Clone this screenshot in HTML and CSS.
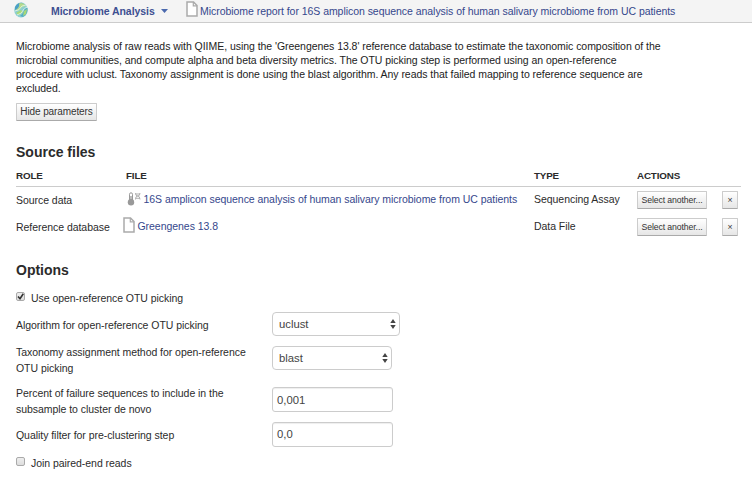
FILE: index.html
```html
<!DOCTYPE html>
<html lang="en">
<head>
<meta charset="utf-8">
<title>Microbiome Analysis</title>
<link rel="stylesheet" href="styles.css">
</head>
<body>
<svg width="0" height="0" class="defs">
  <symbol id="doc" viewBox="0 0 12 16"><path d="M1 1h6.5L11 4.5V15H1z" fill="#fff" stroke="#aaa" stroke-width="1.5"/><path d="M7.3 1v3.8H11" fill="none" stroke="#aaa" stroke-width="1.2"/></symbol>
  <symbol id="updown" viewBox="0 0 6 10"><path d="M3 0l2.7 4H.3zM3 10L.3 6h5.4z" fill="#444"/></symbol>
</svg>
<header class="topbar">
  <svg class="globe" viewBox="0 0 14 16">
    <ellipse cx="7" cy="8" rx="6.8" ry="7.5" fill="#8ccfd0"/>
    <path d="M1 5Q4 0 9 1L5 5Q3 8 1 8z" fill="#4b9fc6"/>
    <path d="M5 1.5Q9 0 12 4L8 5 4 9 2 8Q6 5 5 1.5z" fill="#b5da8c"/>
    <path d="M13.5 6Q14 12 9 15L6 14Q11 10 10 6z" fill="#55adc5"/>
    <path d="M2 11L7 8 9 10 5 13zM10 9l3-2-1 5-3 2z" fill="#a8d977"/>
    <path d="M1 9Q5 9 8 4l4-1M3 13Q8 12 10 7l3-2" fill="none" stroke="#e5f5ee" stroke-width=".8"/>
  </svg>
  <strong class="app">Microbiome Analysis</strong>
  <svg class="caret" viewBox="0 0 7 4"><path d="M0 0h7L3.5 4z" fill="#4b69ae"/></svg>
  <svg class="doc top-doc"><use href="#doc"/></svg>
  <a class="report">Microbiome report for 16S amplicon sequence analysis of human salivary microbiome from UC patients</a>
</header>
<main>
  <p class="description">Microbiome analysis of raw reads with QIIME, using the 'Greengenes 13.8' reference database to estimate the taxonomic composition of the<br>microbial communities, and compute alpha and beta diversity metrics. The OTU picking step is performed using an open-reference<br>procedure with uclust. Taxonomy assignment is done using the blast algorithm. Any reads that failed mapping to reference sequence are<br>excluded.</p>
  <button class="btn hide">Hide parameters</button>
  <h2 class="source-title">Source files</h2>
  <div class="files">
    <div class="row head"><span>ROLE</span><span>FILE</span><span>TYPE</span><span>ACTIONS</span></div>
    <div class="row">
      <span class="role">Source data</span>
      <span class="file assay-file"><svg class="assay" viewBox="0 0 14 14"><path d="M2.5 8V2.3a1.5 1.5 0 0 1 3 0V8" fill="#fff" stroke="#999"/><path d="M4 4v6" stroke="#999" stroke-width="1.3"/><circle cx="4" cy="10.2" r="3.2" fill="#999"/><path d="M8.5 1q0 3 2.2 3T13 7.5M13 1q0 3-2.3 3T8.5 7.5M8.5 2h4.5M8.5 6.3h4.5" fill="none" stroke="#aaa" stroke-width=".9"/></svg><a>16S amplicon sequence analysis of human salivary microbiome from UC patients</a></span>
      <span class="type">Sequencing Assay</span>
      <button class="btn small">Select another...</button><button class="btn small">×</button>
    </div>
    <div class="row">
      <span class="role">Reference database</span>
      <span class="file"><svg class="doc"><use href="#doc"/></svg><a>Greengenes 13.8</a></span>
      <span class="type">Data File</span>
      <button class="btn small">Select another...</button><button class="btn small">×</button>
    </div>
  </div>
  <h2 class="options-title">Options</h2>
  <div class="check first"><span class="box"><svg viewBox="0 0 9 9"><path d="M2 4.5L4 6.8 7.3 1.8" fill="none" stroke="#333" stroke-width="1.6"/></svg></span><span>Use open-reference OTU picking</span></div>
  <div class="fields">
    <span class="label">Algorithm for open-reference OTU picking</span>
    <div class="control select wide"><span>uclust</span><svg><use href="#updown"/></svg></div>
    <span class="label">Taxonomy assignment method for open-reference<br>OTU picking</span>
    <div class="control select"><span>blast</span><svg><use href="#updown"/></svg></div>
    <span class="label">Percent of failure sequences to include in the<br>subsample to cluster de novo</span>
    <div class="control input">0,001</div>
    <span class="label">Quality filter for pre-clustering step</span>
    <div class="control input">0,0</div>
  </div>
  <div class="check last"><span class="box"></span><span>Join paired-end reads</span></div>
</main>
</body>
</html>
```
FILE: styles.css
```css
* { box-sizing: border-box; }
body { margin: 0; background: #fff; color: #2b2b2b; font: 10.5px/14px "Liberation Sans", Arial, sans-serif; letter-spacing: -.045px; white-space: nowrap; }
svg { display: block; flex: none; }
.defs { position: absolute; }
a { color: #35478c; }
.topbar { height: 23px; padding-left: 14px; background: #f4f4f4; border-bottom: 1px solid #ccc; display: flex; align-items: center; }
.globe { width: 14px; height: 16px; margin-top: -2px; }
.app { width: 105px; margin-left: 23px; color: #3d4f91; }
.caret { width: 7px; height: 4px; margin-left: 5px; }
.doc { width: 12px; height: 16px; }
.top-doc { margin: -4px 2px 0 18px; }
main { padding: 16px 11px 0 16px; }
.description { margin: 0; height: 56px; color: #222; }
.btn { height: 18px; padding: 0; border: 1px solid #ccc; border-bottom-color: #aaa; border-radius: 1px; background: linear-gradient(#fff, #e6e6e6); color: #333; font: inherit; line-height: 14px; letter-spacing: -.1px; }
.hide { display: block; width: 81px; margin-top: 8px; font-size: 10px; }
h2 { margin: 0; font-size: 14px; line-height: 18px; letter-spacing: 0; }
.source-title { margin-top: 22px; }
.row { display: grid; grid-template-columns: 110px 408px 103px 85px 16px; height: 27px; align-items: center; }
.row.head { height: 26px; padding-top: 4px; border-bottom: 1px solid #ccc; font-weight: bold; font-size: 9.8px; letter-spacing: -.15px; grid-template-columns: 110px 408px 103px 101px; }
.small { width: 70px; margin-top: -2px; font-size: 8.7px; }
.small + .small { width: 16px; }
.role { margin-top: -1px; }
.type { margin-top: -3px; }
.file { display: flex; align-items: center; gap: 2.5px; margin: -3px 0 0 -3px; }
.file .doc { margin-top: -3px; }
.assay-file { margin-left: 1px; }
.assay { width: 14px; height: 14px; }
.options-title { margin-top: 20px; }
.check { display: flex; align-items: center; height: 14px; gap: 6px; }
.first { margin-top: 12px; }
.last { margin-top: 13px; }
.box { width: 9px; height: 9px; margin-top: -3px; border: 1px solid #aaa; border-radius: 2px; background: linear-gradient(#eee, #ddd); }
.box svg { width: 9px; height: 9px; margin: -1px; }
.fields { display: grid; grid-template-columns: 256px 128px; grid-template-rows: 38px 31px 51px 18px; align-items: center; }
.label { line-height: 16px; margin-top: 2px; }
.control { display: flex; align-items: center; height: 24px; border: 1px solid #ccc; border-radius: 4px; background: #fff; color: #444; font-size: 11.3px; letter-spacing: 0; }
.select { width: 120px; margin-top: -2px; padding: 0 3px 0 6px; justify-content: space-between; }
.wide { width: 128px; margin-top: 0; }
.select svg { width: 6px; height: 10px; }
.input { width: 121px; height: 25px; padding-left: 4px; border-radius: 3px; box-shadow: inset 0 1px 1px #eee; }
```
